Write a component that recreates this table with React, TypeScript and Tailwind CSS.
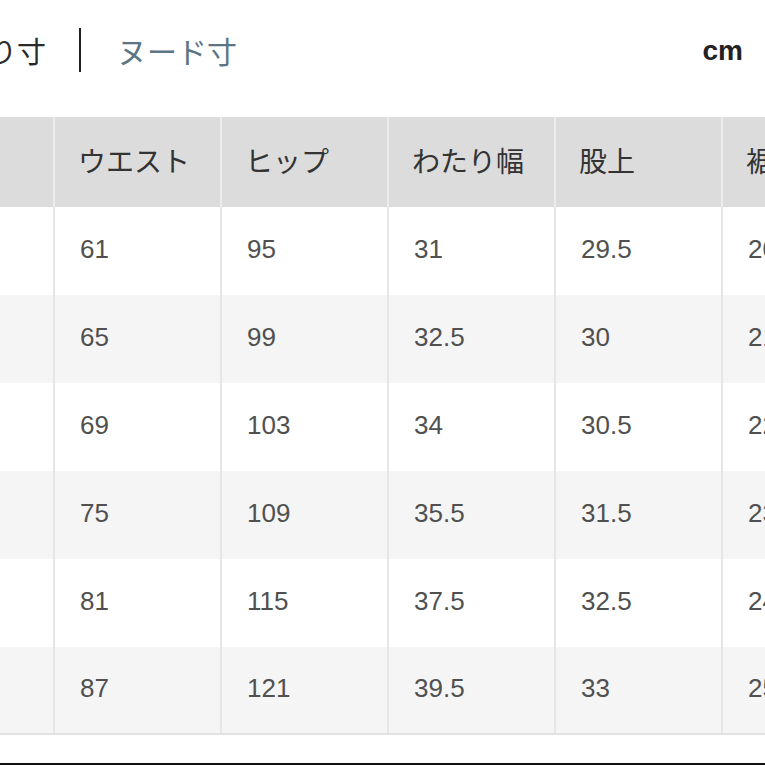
import React from "react";

const headers = ["サイズ", "ウエスト", "ヒップ", "わたり幅", "股上", "裾幅"];
const rows = [
  ["XS", "61", "95", "31", "29.5", "20"],
  ["S", "65", "99", "32.5", "30", "21"],
  ["M", "69", "103", "34", "30.5", "22"],
  ["L", "75", "109", "35.5", "31.5", "23"],
  ["XL", "81", "115", "37.5", "32.5", "24"],
  ["XXL", "87", "121", "39.5", "33", "25"],
];

export default function App() {
  return (
    <div
      className="w-[765px] h-[765px] overflow-hidden bg-white relative"
      style={{ fontFamily: '"Liberation Sans", "Noto Sans CJK JP", sans-serif' }}
    >
      <div className="h-[117px] flex items-start pt-[27px]">
        <div className="flex items-center h-[46px] -ml-[128px]">
          <span
            className="text-[29px] leading-none text-[#2a2a2a]"
            style={{ fontFamily: '"Noto Sans CJK JP", sans-serif' }}
          >
            できあがり寸
          </span>
          <span className="w-[2px] h-[44px] bg-[#1f1f1f] ml-[33px] mr-[36px]" />
          <span
            className="text-[30px] leading-none text-[#5b7584]"
            style={{ fontFamily: '"Noto Sans CJK JP", sans-serif' }}
          >
            ヌード寸
          </span>
        </div>
        <div className="ml-auto mr-[22px] h-[48px] flex items-center text-[28px] font-bold text-[#222]">
          cm
        </div>
      </div>

      <div className="-ml-[112px] w-[1100px]">
        <div className="flex h-[90px] bg-[#dcdcdc]">
          {headers.map((h) => (
            <div
              key={h}
              className="w-[167px] shrink-0 border-r-2 border-[#ececec] flex items-center pl-[23px] pb-[4px] text-[28px] text-[#333]"
              style={{ fontFamily: '"Noto Sans CJK JP", sans-serif' }}
            >
              {h}
            </div>
          ))}
        </div>
        {rows.map((r, i) => (
          <div
            key={i}
            className={`flex h-[88px] ${i % 2 === 0 ? "bg-white" : "bg-[#f5f5f5]"} ${
              i === rows.length - 1 ? "border-b-2 border-[#e2e2e2]" : ""
            }`}
          >
            {r.map((c, j) => (
              <div
                key={j}
                className="w-[167px] shrink-0 border-r-2 border-[#e6e6e6] flex items-center pl-[25px] pb-[4px] text-[26px] text-[#505050]"
              >
                {c}
              </div>
            ))}
          </div>
        ))}
      </div>

      <div className="absolute left-0 right-0 bottom-0 h-[2px] bg-[#111]" />
    </div>
  );
}
